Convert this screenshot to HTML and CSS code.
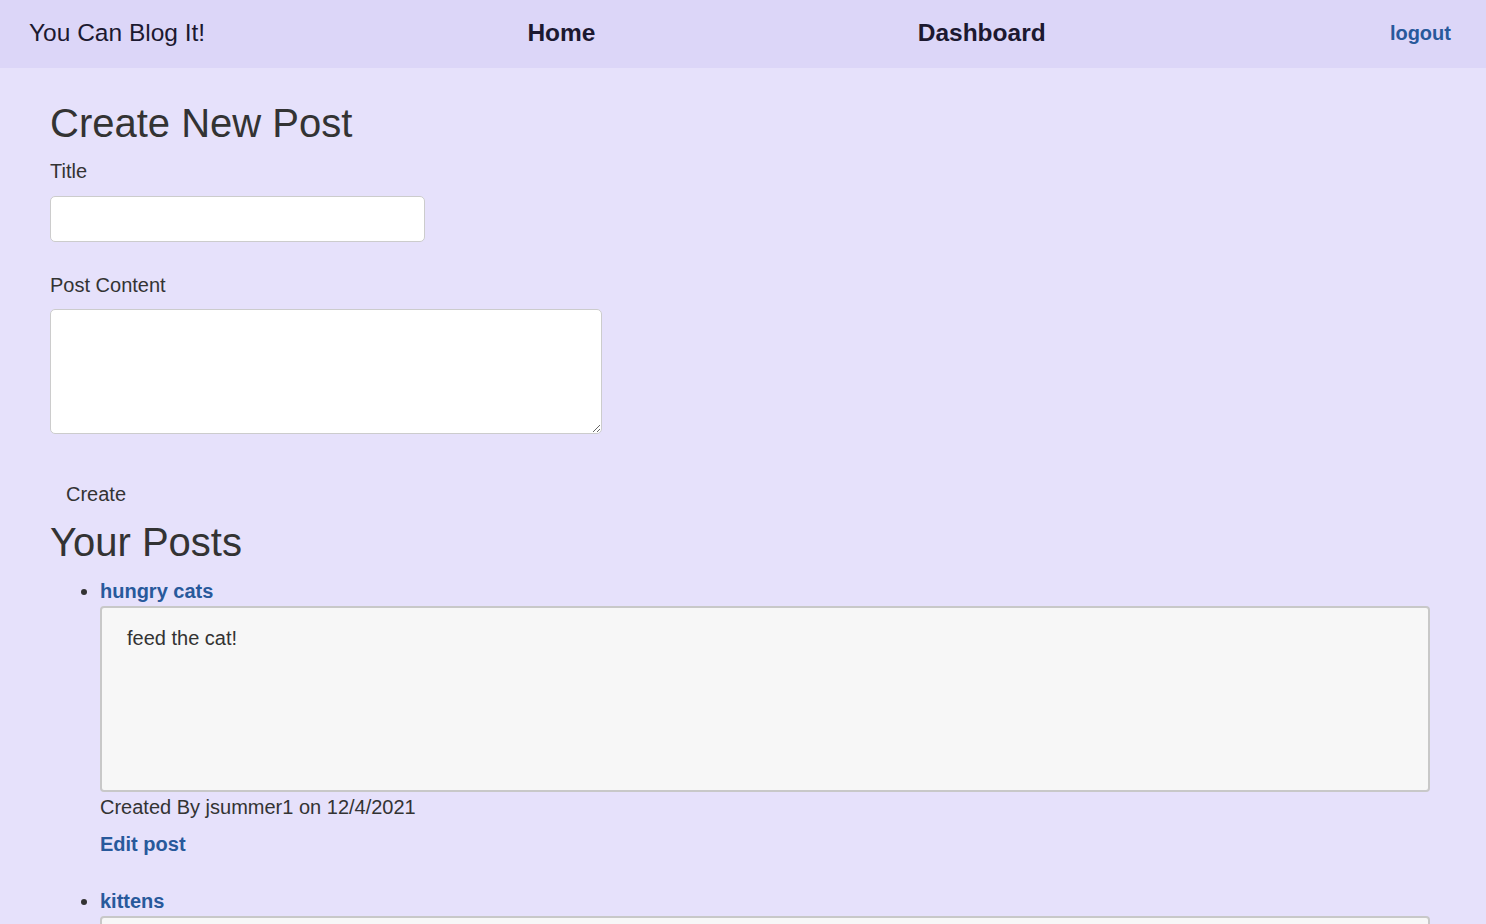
FILE: index.html
```html
<!DOCTYPE html>
<html lang="en">
<head>
<meta charset="utf-8">
<title>You Can Blog It!</title>
<link rel="stylesheet" href="styles.css">
</head>
<body>
<nav class="navbar">
  <a class="brand" href="#">You Can Blog It!</a>
  <a class="nav-link" href="#">Home</a>
  <a class="nav-link" href="#">Dashboard</a>
  <a class="logout" href="#">logout</a>
</nav>
<main class="container">
  <h2 class="page-title">Create New Post</h2>
  <form class="new-post-form">
    <div class="form-group">
      <label class="form-label" for="title">Title</label>
      <input class="title-input" id="title" type="text">
    </div>
    <div class="form-group">
      <label class="form-label" for="content">Post Content</label>
      <textarea class="content-input" id="content"></textarea>
    </div>
    <button class="create-btn" type="button">Create</button>
  </form>
  <h2 class="section-title">Your Posts</h2>
  <ul class="post-list">
    <li class="post-item">
      <a class="post-link" href="#">hungry cats</a>
      <div class="post-body">feed the cat!</div>
      <div class="post-meta">Created By jsummer1 on 12/4/2021</div>
      <a class="edit-link" href="#">Edit post</a>
    </li>
    <li class="post-item">
      <a class="post-link" href="#">kittens</a>
      <div class="post-body">so many kittens!</div>
      <div class="post-meta">Created By jsummer1 on 12/4/2021</div>
      <a class="edit-link" href="#">Edit post</a>
    </li>
  </ul>
</main>
</body>
</html>
```
FILE: styles.css
```css
html, body {
  margin: 0;
  padding: 0;
}

body {
  background: #e6e1fb;
  color: #333333;
  font-family: "Liberation Sans", Arial, sans-serif;
  font-size: 20px;
  line-height: 1.43;
}

a {
  text-decoration: none;
}

.navbar {
  display: flex;
  align-items: center;
  justify-content: space-between;
  height: 68px;
  box-sizing: border-box;
  padding: 0 35px 2px 29px;
  background: #dcd6f8;
}

.brand {
  color: #1c1930;
  font-size: 24.5px;
  line-height: 1.15;
}

.nav-link {
  color: #1c1930;
  font-size: 24.5px;
  font-weight: bold;
  line-height: 1.15;
}

.logout {
  margin-left: 22px;
  color: #28599b;
  font-size: 20px;
  font-weight: bold;
  line-height: 1.15;
}

.container {
  padding: 0 56px 0 50px;
}

.page-title,
.section-title {
  font-size: 40px;
  font-weight: normal;
  line-height: 44px;
  color: #333333;
}

.page-title {
  margin: 33px 0 12px;
}

.section-title {
  margin: 0 0 13px;
}

.new-post-form {
  margin: 0;
}

.form-group {
  margin-bottom: 29px;
}

.form-label {
  display: block;
  margin-bottom: 10px;
}

.title-input {
  display: block;
  width: 375px;
  height: 46px;
  box-sizing: border-box;
  margin: 0;
  border: 1px solid #cccccc;
  border-radius: 5px;
  background: #ffffff;
  font: inherit;
  padding: 6px 12px;
}

.content-input {
  display: block;
  width: 552px;
  height: 125px;
  box-sizing: border-box;
  margin: 0;
  border: 1px solid #cccccc;
  border-radius: 5px;
  background: #ffffff;
  font: inherit;
  padding: 6px 12px;
}

.create-btn {
  display: block;
  margin: 0;
  padding: 17px 16px 11px;
  border: none;
  background: transparent;
  color: #333333;
  font: inherit;
  line-height: 1.43;
}

.post-list {
  margin: 0;
  padding-left: 50px;
}

.post-item {
  margin-bottom: 28px;
}

.post-link {
  display: block;
  color: #28599b;
  font-weight: bold;
}

.post-body {
  margin-top: 1px;
  height: 186px;
  box-sizing: border-box;
  padding: 16px 25px;
  border: 2px solid #c8c8c8;
  border-radius: 4px;
  background: #f7f7f7;
}

.post-meta {
  margin-top: 1px;
}

.edit-link {
  display: block;
  margin-top: 8px;
  color: #28599b;
  font-weight: bold;
}
```
